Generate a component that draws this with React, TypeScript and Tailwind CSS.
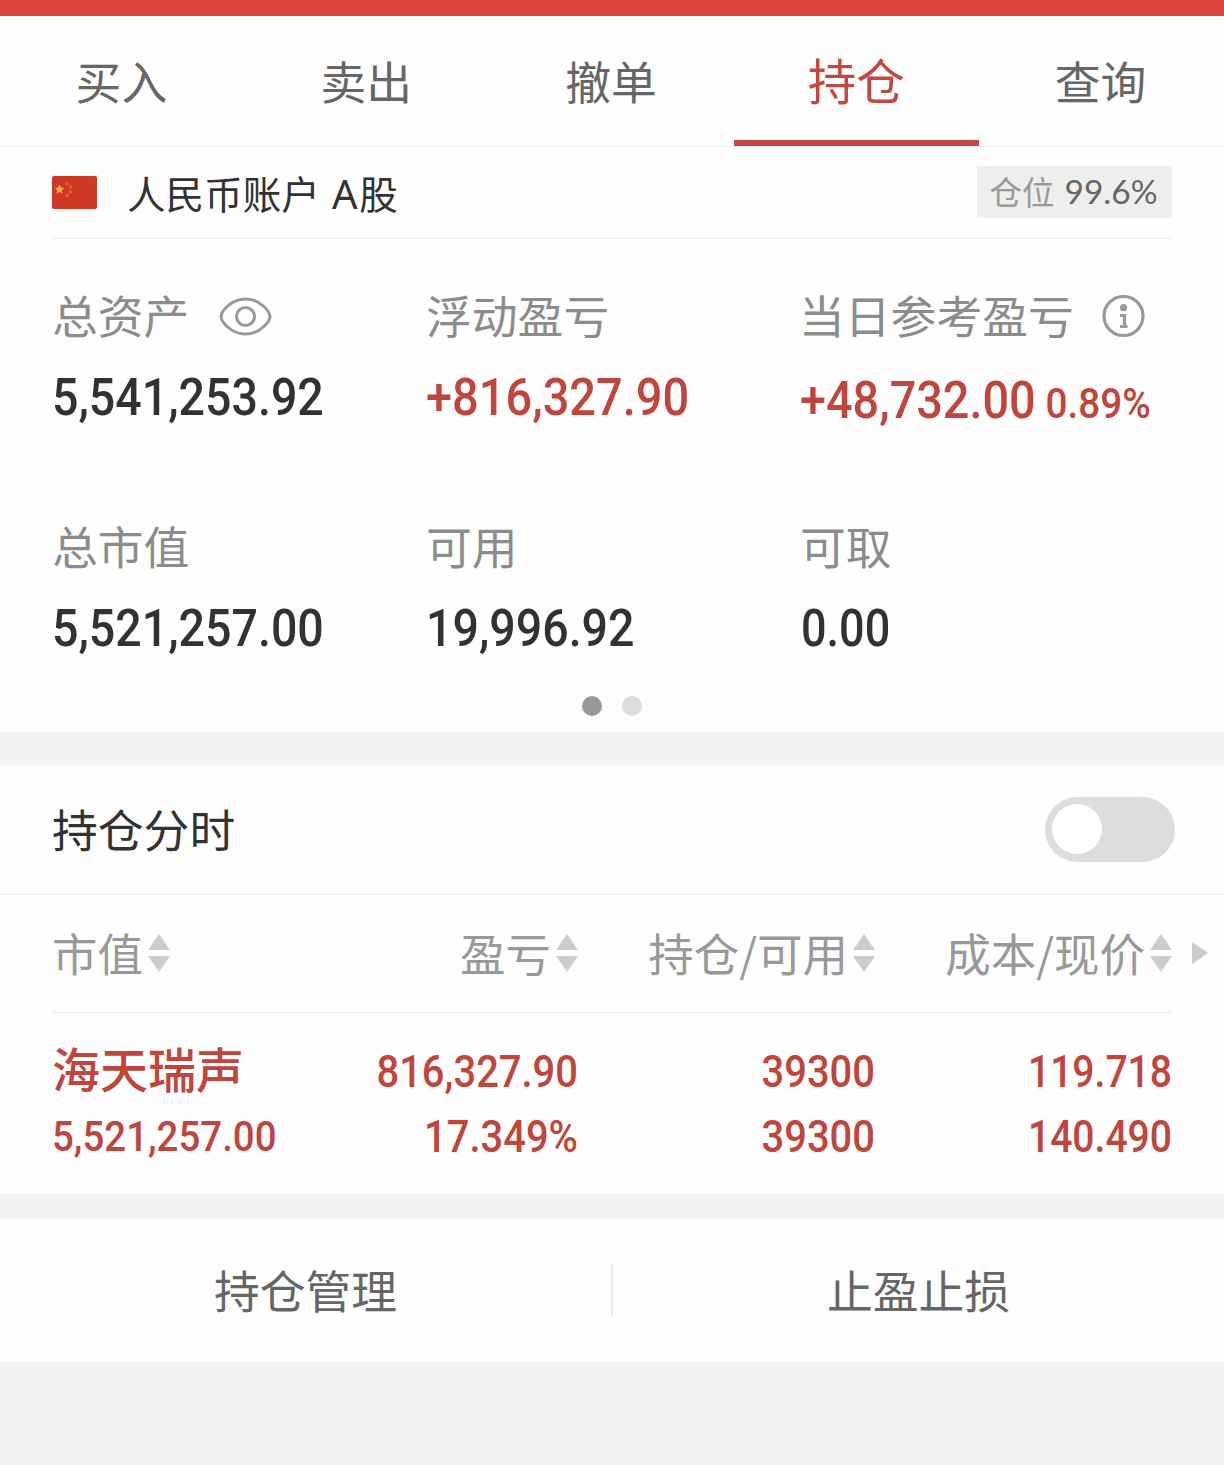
import React from "react";

const tabs = ["买入", "卖出", "撤单", "持仓", "查询"];

function Flag() {
  return (
    <svg width="45" height="33" viewBox="0 0 45 33">
      <rect width="45" height="33" rx="2" fill="#cf3825" />
      <polygon points="7.5,8.500 8.900,11.500 12,12 9.700,14.400 10.500,17.500 7.500,16 4.500,17.500 5.300,14.400 3,12 6.100,11.500" fill="#f7b239" />
      <g fill="#e66337">
        <circle cx="15" cy="7.800" r="1.700" />
        <circle cx="18.500" cy="11" r="1.700" />
        <circle cx="18.500" cy="16" r="1.700" />
        <circle cx="15" cy="19.500" r="1.700" />
      </g>
    </svg>
  );
}

function Eye() {
  return (
    <svg width="53" height="39" viewBox="0 0 53 39" fill="none" stroke="#999999" strokeWidth="3" className="ml-px">
      <path d="M2 19.500C2 15.500 11 2 26.500 2S51 15.500 51 19.500S42 37 26.500 37S2 23.500 2 19.500Z" />
      <circle cx="26.500" cy="19.500" r="9" />
    </svg>
  );
}

function Info() {
  return (
    <svg width="43" height="43" viewBox="0 0 43 43" fill="none" stroke="#999999" strokeWidth="3.200" className="-ml-px">
      <circle cx="21.500" cy="21" r="19.500" />
      <circle cx="21.500" cy="12.700" r="3.600" fill="#999999" stroke="none" />
      <path d="M18 20.500H22.500V31.500M18 31.500H25.500" />
    </svg>
  );
}

function Sort() {
  return (
    <svg width="22" height="38" viewBox="0 0 22 38" fill="#cccccc" className="-mt-0.5 ml-[5px]">
      <polygon points="11,0 22,16 0,16" />
      <polygon points="0,22 22,22 11,38" />
    </svg>
  );
}

function Amount({ value, red }: { value: string; red?: boolean }) {
  return (
    <span
      className={`block w-max origin-left font-[Roboto] text-[52px] font-medium leading-[60px] ${
        red ? "scale-x-[.903] text-[#bf453d]" : value === "0.00" ? "ml-px scale-x-[.865] text-[#323232]" : "scale-x-[.895] text-[#323232]"
      }`}
    >
      {value}
    </span>
  );
}

function Stat({ label, value, red, icon }: { label: string; value: string; red?: boolean; icon?: React.ReactNode }) {
  return (
    <div className="h-[231px]">
      <div className="flex h-[60px] items-center gap-[29px] text-[45.800px] text-[#8c8c8c]">
        <span className="-mt-[3px]">{label}</span>
        {icon}
      </div>
      <div className="mt-[22px]">
        <Amount value={value} red={red} />
      </div>
    </div>
  );
}

function Cell({ value, narrow }: { value: string; narrow?: boolean }) {
  return (
    <span className={`block origin-right text-right ${narrow ? "scale-x-[.868]" : "scale-x-[.887]"}`}>{value}</span>
  );
}

export default function App() {
  return (
    <div className="h-[1465px] w-[1224px] overflow-hidden bg-[#f4f4f4] font-['Noto_Sans_CJK_SC',sans-serif]">
      <div className="h-4 bg-[#df4540]" />
      <nav className="grid h-[131px] grid-cols-5 border-b border-[#ededed] bg-[#fefefe]">
        {tabs.map((tab) => (
          <div
            key={tab}
            className={
              tab === "持仓"
                ? "flex items-center justify-center border-b-[6px] border-[#c24841] pr-px pt-0.5 text-[48.500px] text-[#c24841]"
                : "flex items-center justify-center pb-0.5 pr-0.5 text-[45.800px] text-[#666666]"
            }
          >
            {tab}
          </div>
        ))}
      </nav>

      <section className="h-[585px] bg-[#fefefe] px-[52px]">
        <div className="flex h-[92px] items-center border-b border-[#ededed]">
          <Flag />
          <span className="mt-0.5 ml-[30px] whitespace-pre text-[38.600px] text-[#323232]">
            人民币账户
            <span className="font-['Noto_Sans'] text-[40px] tracking-[1.700px]">{" A"}</span>
            股
          </span>
          <div className="-mt-0.5 ml-auto flex h-[52px] w-[195px] items-center justify-center gap-2.5 bg-[#eeeeee] pr-0.5 text-[32.500px] text-[#999999]">
            <span>仓位</span>
            <span className="font-[Lato] text-[33.500px] text-[#666666]">99.6%</span>
          </div>
        </div>
        <div className="grid grid-cols-[374px_374px_1fr] pt-[47px]">
          <Stat label="总资产" value="5,541,253.92" icon={<Eye />} />
          <Stat label="浮动盈亏" value="+816,327.90" red />
          <div className="h-[231px]">
            <div className="flex h-[60px] items-center gap-[29px] whitespace-nowrap text-[45.800px] text-[#8c8c8c]">
              <span className="-ml-px -mt-[3px]">当日参考盈亏</span>
              <Info />
            </div>
            <div className="mt-[25px] flex w-max origin-left scale-x-[.9] items-baseline gap-[11px] font-[Roboto] font-medium text-[#bf453d]">
              <span className="text-[52px] leading-[60px]">+48,732.00</span>
              <span className="text-[43px] leading-[60px]">0.89%</span>
            </div>
          </div>
          <Stat label="总市值" value="5,521,257.00" />
          <Stat label="可用" value="19,996.92" />
          <Stat label="可取" value="0.00" />
        </div>
        <div className="-mt-[52px] flex justify-center gap-5">
          <span className="size-5 rounded-full bg-[#999999]" />
          <span className="size-5 rounded-full bg-[#dddddd]" />
        </div>
      </section>

      <section className="mt-[33px] h-[428px] bg-[#fefefe]">
        <div className="flex h-[130px] items-center justify-between border-b border-[#ededed] pl-[52px] pr-[49px]">
          <span className="-mt-0.5 text-[45.800px] text-[#323232]">持仓分时</span>
          <div className="flex h-[65px] w-[130px] items-center rounded-full bg-[#dddddd] px-[7px]">
            <span className="-mt-px size-[50px] rounded-full bg-white" />
          </div>
        </div>
        <div className="flex pl-[52px]">
          <div className="grid w-[1120px] grid-cols-[230px_296px_297px_297px] border-b border-[#ededed]">
            {["市值", "盈亏", "持仓/可用", "成本/现价"].map((label, i) => (
              <div
                key={label}
                className={`flex h-[117px] items-center whitespace-nowrap text-[45.500px] text-[#999999] ${i ? "justify-end" : ""}`}
              >
                <span className="-mt-0.5">{label}</span>
                <Sort />
              </div>
            ))}
          </div>
          <svg width="16" height="22" viewBox="0 0 16 22" fill="#cccccc" className="ml-5 mt-[47px]">
            <polygon points="0,0 16,11 0,22" />
          </svg>
        </div>
        <div className="mx-[52px] grid grid-cols-[230px_296px_297px_297px] pt-[26px] font-[Roboto] text-[45px] font-medium leading-[65px] text-[#bf453d]">
          <div>
            <span className="-mt-1 mb-1 block font-['Noto_Sans_CJK_SC',sans-serif] text-[48px]">海天瑞声</span>
            <span className="block w-max origin-left scale-x-[.894] text-[43px]">5,521,257.00</span>
          </div>
          <div>
            <Cell value="816,327.90" />
            <Cell value="17.349%" />
          </div>
          <div>
            <Cell value="39300" />
            <Cell value="39300" />
          </div>
          <div>
            <Cell value="119.718" narrow />
            <Cell value="140.490" narrow />
          </div>
        </div>
      </section>

      <section className="mt-[26px] flex h-[143px] items-center bg-[#fefefe] pb-0.5 text-[45.800px] text-[#666666]">
        <div className="flex-1 text-center">持仓管理</div>
        <div className="h-[52px] w-0.5 bg-[#e8e8e8]" />
        <div className="flex-1 text-center">止盈止损</div>
      </section>
    </div>
  );
}
